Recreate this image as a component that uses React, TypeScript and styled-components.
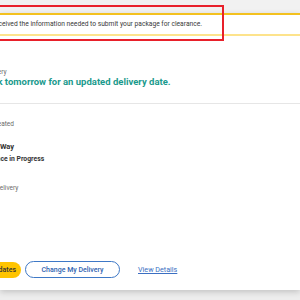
import React from 'react';
import styled, { createGlobalStyle } from 'styled-components';

const GlobalStyle = createGlobalStyle`
    html, body {
        margin: 0;
        padding: 0;
        background: #ededed;
        overflow: hidden;
    }

    body {
        font-family: Roboto, "Liberation Sans", Arial, sans-serif;
        color: #333333;
    }
`;

const Page = styled.div`
    position: relative;
    width: 300px;
    height: 300px;
    overflow: hidden;
    background: #ededed;
`;

const TopStrip = styled.div`
    height: 13px;
    background: #f1f1f1;
`;

const Card = styled.div`
    height: 277px;
    background: #ffffff;
    box-shadow: 0 2px 6px rgba(0, 0, 0, 0.18);
`;

const Alert = styled.div`
    height: 19px;
    display: flex;
    align-items: center;
    border-top: 2px solid #f3c11f;
    border-bottom: 2px solid #fde38c;
    white-space: nowrap;
`;

const AlertText = styled.p`
    margin: 0 0 0 -34px;
    font-size: 6.7px;
    line-height: 9px;
    color: #3a3a3a;
`;

const Annotation = styled.div`
    position: absolute;
    left: -20px;
    top: 5px;
    width: 240px;
    height: 32px;
    border: 2.5px solid #e8202a;
    pointer-events: none;
`;

const DeliverySection = styled.section`
    padding: 32px 0 15px;
    margin-left: -47px;
    border-bottom: 1px solid #e6e6e6;
    white-space: nowrap;
`;

const Label = styled.div`
    font-size: 6.5px;
    line-height: 8px;
    color: #6b6b6b;
`;

const Headline = styled.h2`
    margin: 0;
    font-size: 9.5px;
    line-height: 12px;
    font-weight: 700;
    color: #1a9a8d;
`;

const Steps = styled.ul`
    list-style: none;
    margin: 0 0 0 -26px;
    padding: 16px 0 0;
    white-space: nowrap;
`;

const Step = styled.li<{ $gap: number }>`
    margin-top: ${p => p.$gap}px;
`;

const StepName = styled.div<{ $current?: boolean }>`
    margin-left: ${p => (p.$current ? 2 : 0)}px;
    font-size: ${p => (p.$current ? 7.5 : 6.5)}px;
    line-height: ${p => (p.$current ? 10 : 9)}px;
    font-weight: ${p => (p.$current ? 700 : 400)};
    color: ${p => (p.$current ? '#333333' : '#6b6b6b')};
`;

const StepDetail = styled.div`
    margin: 3px 0 0 3px;
    font-size: 6.8px;
    line-height: 8px;
    font-weight: 700;
    color: #333333;
`;

const Actions = styled.div`
    display: flex;
    align-items: center;
    margin: 68px 0 0 -50px;
    white-space: nowrap;
`;

const PrimaryButton = styled.button`
    width: 71px;
    height: 16px;
    padding: 0 5px 0 0;
    border: none;
    border-radius: 8px;
    background: #ffc400;
    font-family: inherit;
    font-size: 7px;
    font-weight: 500;
    color: #333333;
    text-align: right;
`;

const OutlineButton = styled.button`
    margin-left: 4px;
    width: 95px;
    height: 17px;
    padding: 0;
    border: 1.5px solid #3e78c6;
    border-radius: 9px;
    background: #ffffff;
    font-family: inherit;
    font-size: 7px;
    font-weight: 500;
    color: #2f63b0;
`;

const TextLink = styled.a`
    margin-left: 18px;
    font-size: 7.2px;
    color: #3b6fc2;
    text-decoration: underline;
`;

export default function App() {
    return (
        <>
            <GlobalStyle />
            <Page>
                <TopStrip />
                <Card>
                    <Alert>
                        <AlertText>
                            We have received the information needed to submit your package for clearance.
                        </AlertText>
                    </Alert>
                    <DeliverySection>
                        <Label>Estimated Delivery</Label>
                        <Headline>Check back tomorrow for an updated delivery date.</Headline>
                    </DeliverySection>
                    <Steps>
                        <Step $gap={0}>
                            <StepName>Label Created</StepName>
                        </Step>
                        <Step $gap={13}>
                            <StepName $current>On the Way</StepName>
                            <StepDetail>Clearance in Progress</StepDetail>
                        </Step>
                        <Step $gap={21}>
                            <StepName>Out for Delivery</StepName>
                        </Step>
                    </Steps>
                    <Actions>
                        <PrimaryButton>Get Updates</PrimaryButton>
                        <OutlineButton>Change My Delivery</OutlineButton>
                        <TextLink href="#">View Details</TextLink>
                    </Actions>
                </Card>
                <Annotation />
            </Page>
        </>
    );
}
